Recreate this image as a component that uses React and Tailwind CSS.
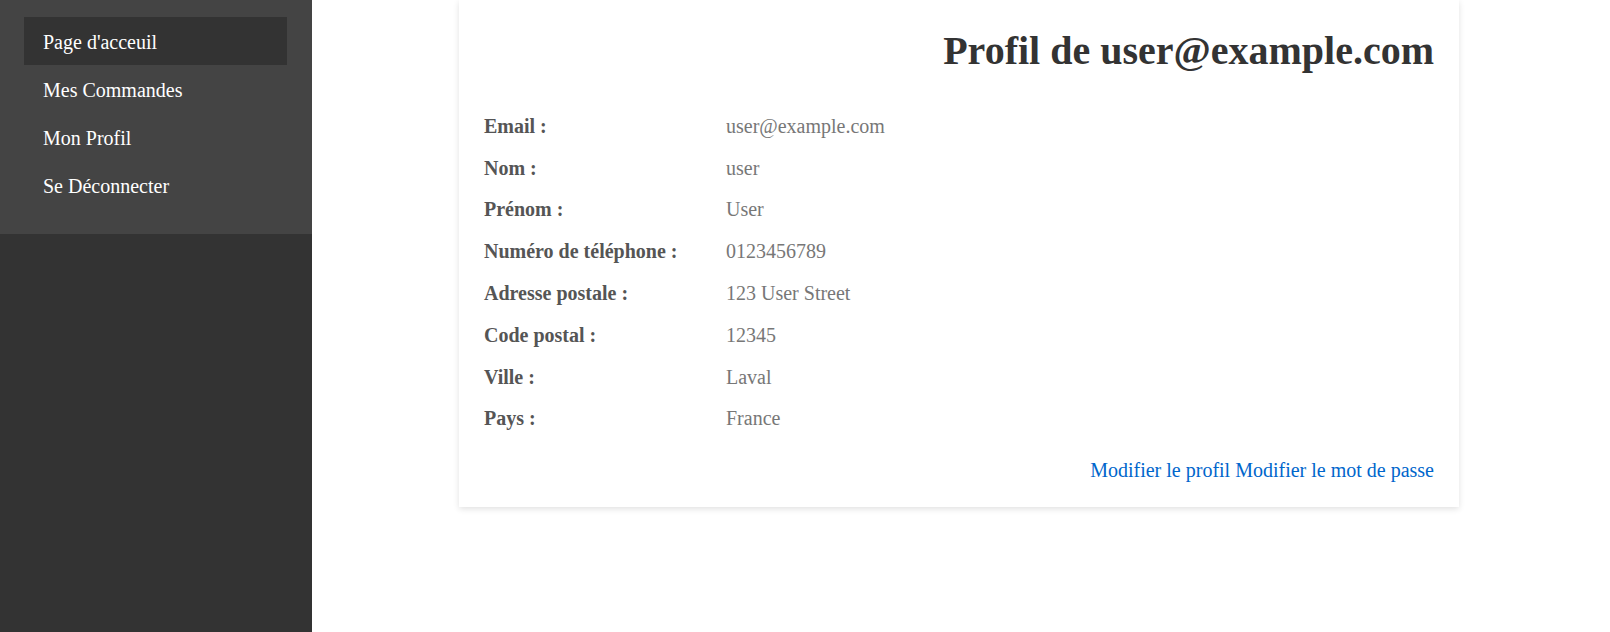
import React from "react";

const rows = [
  ["Email :", "user@example.com"],
  ["Nom :", "user"],
  ["Prénom :", "User"],
  ["Numéro de téléphone :", "0123456789"],
  ["Adresse postale :", "123 User Street"],
  ["Code postal :", "12345"],
  ["Ville :", "Laval"],
  ["Pays :", "France"],
];

const nav = ["Page d'acceuil", "Mes Commandes", "Mon Profil", "Se Déconnecter"];

export default function App() {
  return (
    <div
      className="flex h-[632px] w-full bg-white text-[20px]"
      style={{ fontFamily: '"Liberation Serif", "Times New Roman", serif' }}
    >
      <aside className="flex w-[312px] shrink-0 flex-col bg-[#333]">
        <nav className="h-[234px] bg-[#444] pl-[24px] pr-[25px] pt-[17px]">
          {nav.map((item, i) => (
            <a
              key={item}
              href="#"
              className={`flex h-[48px] items-center pl-[19px] pt-[2px] text-white leading-[23px] ${
                i === 0 ? "bg-[#333]" : ""
              }`}
            >
              {item}
            </a>
          ))}
        </nav>
      </aside>
      <main className="flex-1">
        <div className="ml-[147px] w-[1000px] bg-white px-[25px] pb-[25px] pt-[28px] shadow-[0_2px_6px_rgba(0,0,0,0.12)]">
          <h1 className="text-right text-[40px] font-bold leading-[46px] text-[#333]">
            Profil de user@example.com
          </h1>
          <div className="mt-[31px] grid grid-cols-[242px_1fr]">
            {rows.map(([label, value]) => (
              <React.Fragment key={label}>
                <div className="flex h-[41.8px] items-center font-bold text-[#555]">
                  {label}
                </div>
                <div className="flex h-[41.8px] items-center text-[#777]">
                  {value}
                </div>
              </React.Fragment>
            ))}
          </div>
          <div className="mt-[20px] text-right leading-[23px] text-[#0066cc]">
            <a href="#">Modifier le profil</a>{" "}
            <a href="#">Modifier le mot de passe</a>
          </div>
        </div>
      </main>
    </div>
  );
}
